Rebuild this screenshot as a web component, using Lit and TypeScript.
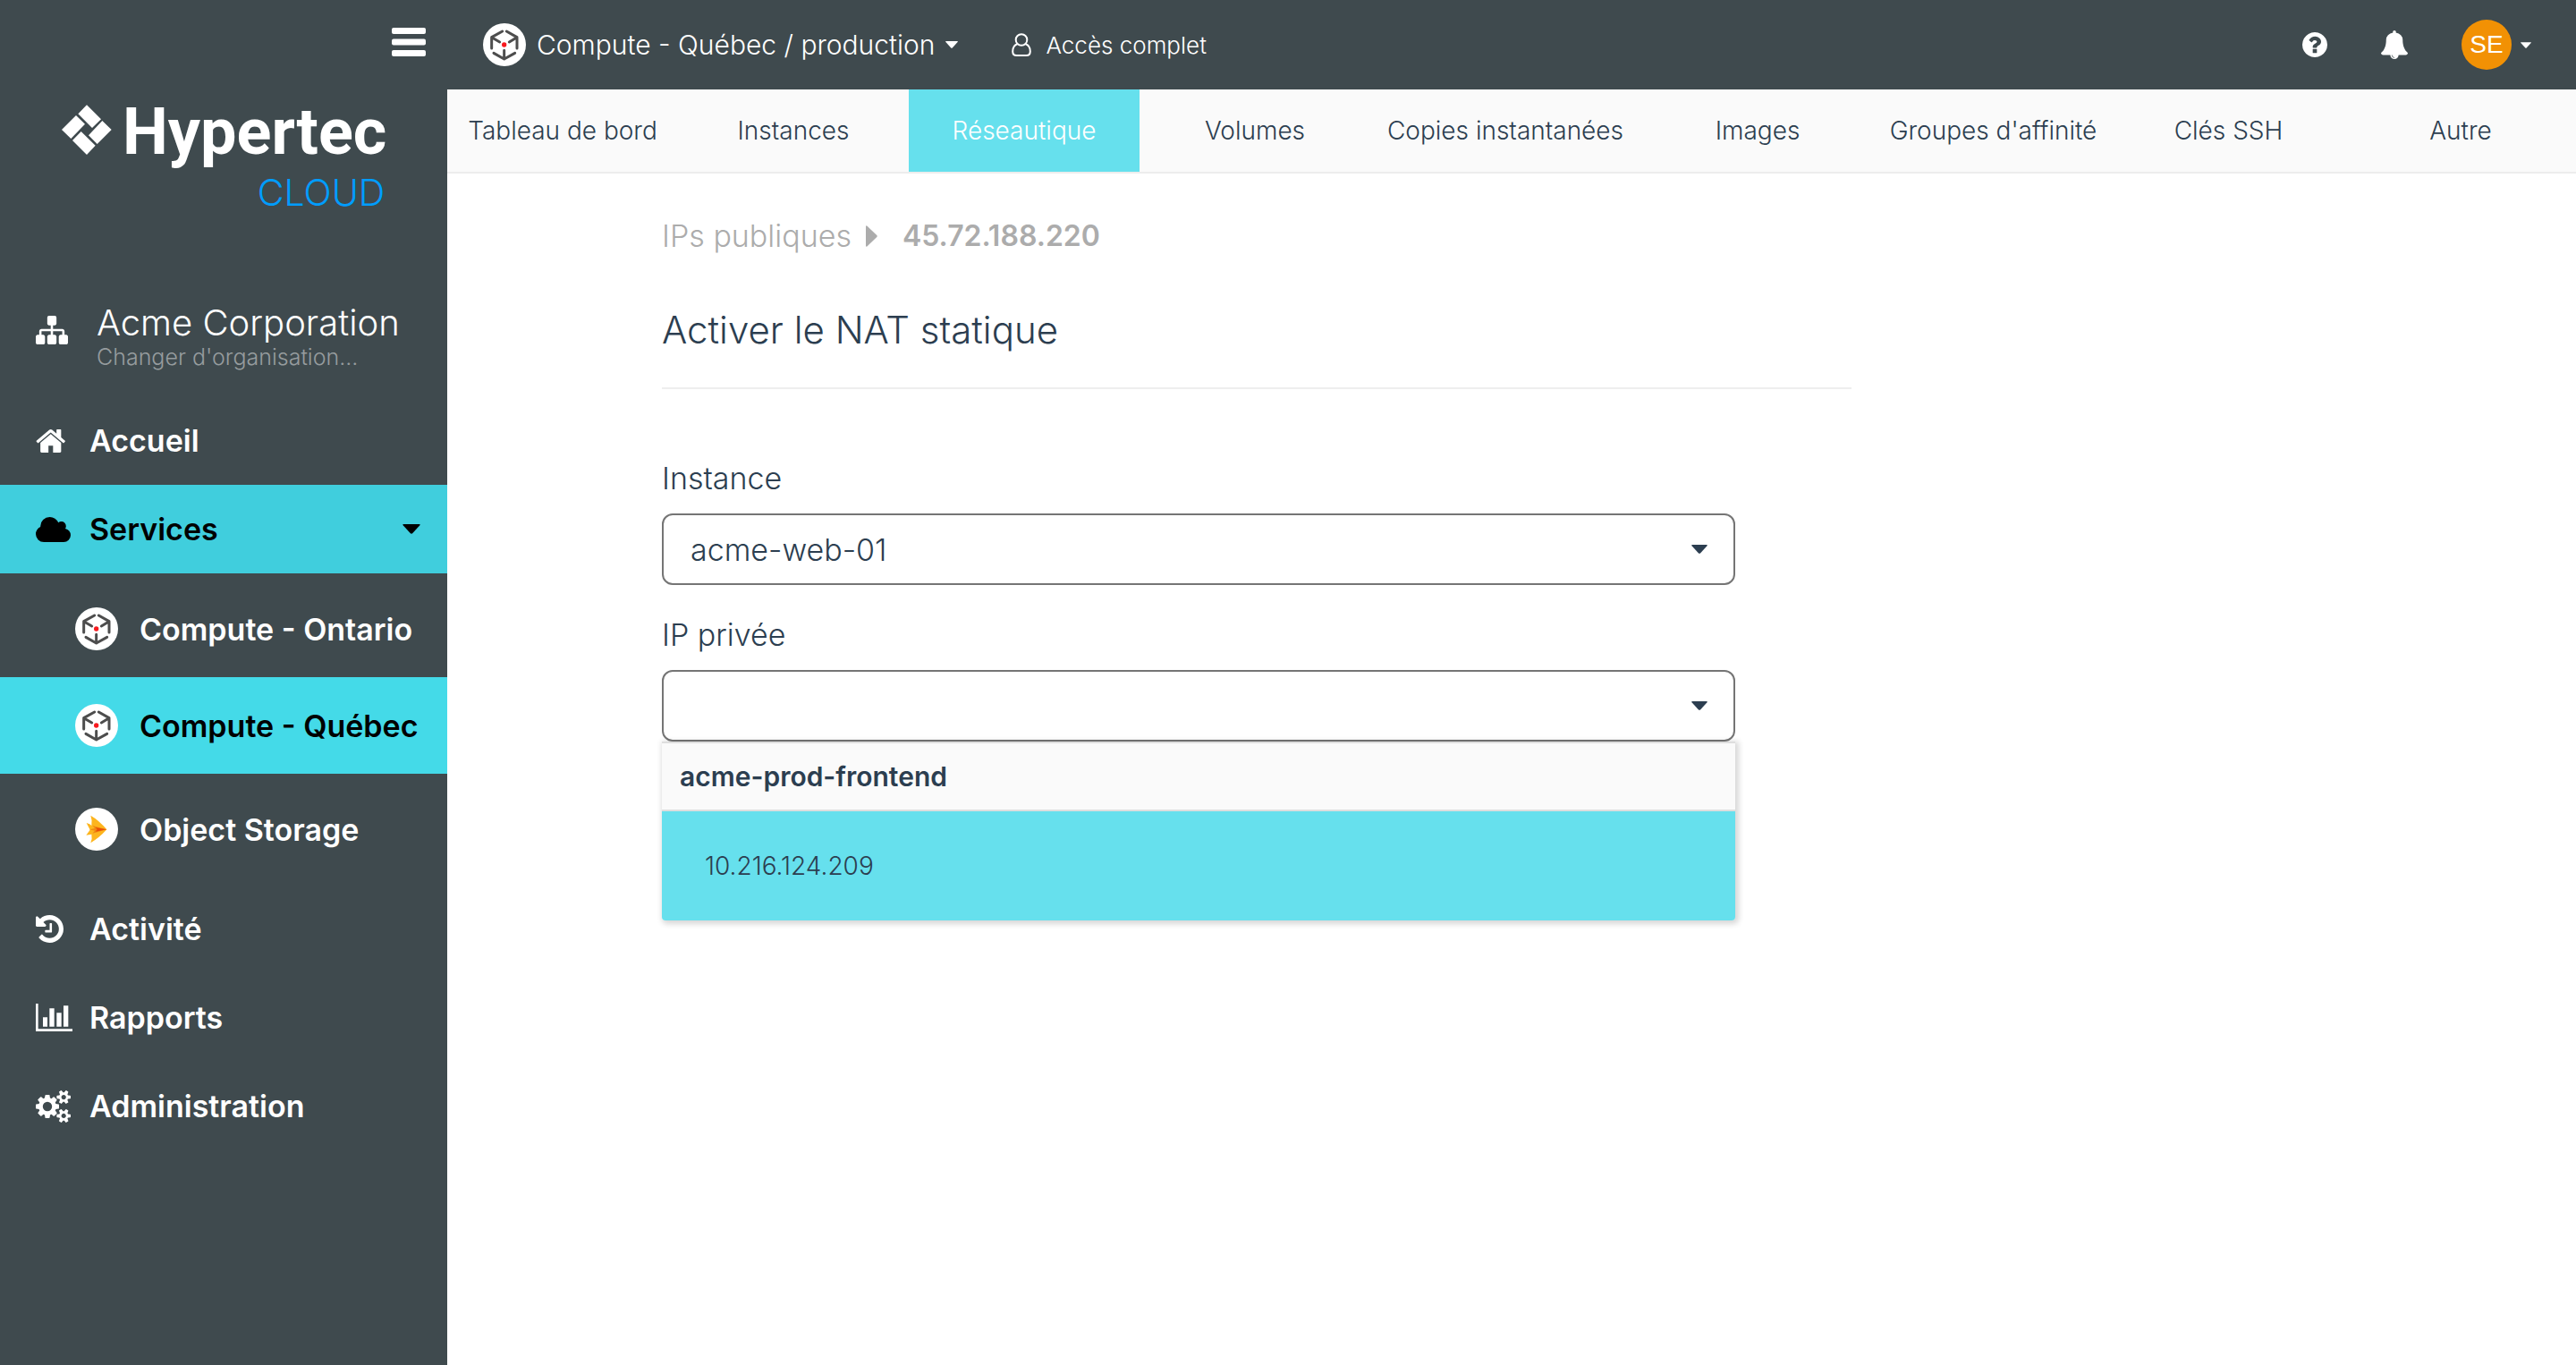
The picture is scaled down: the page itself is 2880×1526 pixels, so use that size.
import { LitElement, html, css, svg } from "lit";
import { customElement } from "lit/decorators.js";
import { classMap } from "lit/directives/class-map.js";

const caret = (cls: string) =>
  html`<svg class=${cls} viewBox="0 0 18 10" aria-hidden="true"><path d="M1 0h16q1.500 0 .5 1.200L10 9.400q-1 .9-2 0L.5 1.200Q-.5 0 1 0z" fill="currentColor" /></svg>`;

const glyph = (viewBox: string, width: number, height: number, d: string) =>
  html`<svg viewBox=${viewBox} width=${width} height=${height} preserveAspectRatio="none" fill="currentColor" aria-hidden="true"><path d=${d} /></svg>`;

const COGS =
  "M896 896q0-106-75-181t-181-75-181 75-75 181 75 181 181 75 181-75 75-181zm768 512q0-52-38-90t-90-38-90 38-38 90q0 53 37.5 90.5t90.5 37.5 90.5-37.5 37.5-90.5zm0-1024q0-52-38-90t-90-38-90 38-38 90q0 53 37.5 90.5t90.5 37.5 90.5-37.5 37.5-90.5zm-384 421v185q0 10-7 19.5t-16 10.5l-155 24q-11 35-32 76 34 48 90 115 7 11 7 20 0 12-7 19-23 30-82.5 89.5t-78.5 59.5q-11 0-21-7l-115-90q-37 19-77 31-11 108-23 155-7 24-30 24h-186q-11 0-20-7.5t-10-17.5l-23-153q-34-10-75-31l-118 89q-7 7-20 7-11 0-21-8-144-133-144-160 0-9 7-19 10-14 41-53t47-61q-23-44-35-82l-152-24q-10-1-17-9.5t-7-19.500v-185q0-10 7-19.500t16-10.500l155-24q11-35 32-76-34-48-90-115-7-11-7-20 0-12 7-20 22-30 82-89t79-59q11 0 21 7l115 90q34-18 77-32 11-108 23-154 7-24 30-24h186q11 0 20 7.500t10 17.500l23 153q34 10 75 31l118-89q8-7 20-7 11 0 21 8 144 133 144 160 0 8-7 19-12 16-42 54t-45 60q23 48 34 82l152 23q10 2 17 10.500t7 19.500zm640 533v140q0 16-149 31-12 27-30 52 51 113 51 138 0 4-4 7-122 71-124 71-8 0-46-47t-52-68q-20 2-30 2t-30-2q-14 21-52 68t-46 47q-2 0-124-71-4-3-4-7 0-25 51-138-18-25-30-52-149-15-149-31v-140q0-16 149-31 13-29 30-52-51-113-51-138 0-4 4-7 4-2 35-20t59-34 30-16q8 0 46 46.500t52 67.500q20-2 30-2t30 2q51-71 92-112l6-2q4 0 124 70 4 3 4 7 0 25-51 138 17 23 30 52 149 15 149 31zm0-1024v140q0 16-149 31-12 27-30 52 51 113 51 138 0 4-4 7-122 71-124 71-8 0-46-47t-52-68q-20 2-30 2t-30-2q-14 21-52 68t-46 47q-2 0-124-71-4-3-4-7 0-25 51-138-18-25-30-52-149-15-149-31v-140q0-16 149-31 13-29 30-52-51-113-51-138 0-4 4-7 4-2 35-20t59-34 30-16q8 0 46 46.500t52 67.500q20-2 30-2t30 2q51-71 92-112l6-2q4 0 124 70 4 3 4 7 0 25-51 138 17 23 30 52 149 15 149 31z";

const icons = {
  sitemap: glyph("0 128 1792 1536", 36, 32, "M1792 1248v320q0 40-28 68t-68 28h-320q-40 0-68-28t-28-68v-320q0-40 28-68t68-28h96v-192h-512v192h96q40 0 68 28t28 68v320q0 40-28 68t-68 28h-320q-40 0-68-28t-28-68v-320q0-40 28-68t68-28h96v-192h-512v192h96q40 0 68 28t28 68v320q0 40-28 68t-68 28h-320q-40 0-68-28t-28-68v-320q0-40 28-68t68-28h96v-192q0-52 38-90t90-38h512v-192h-96q-40 0-68-28t-28-68v-320q0-40 28-68t68-28h320q40 0 68 28t28 68v320q0 40-28 68t-68 28h-96v192h512q52 0 90 38t38 90v192h96q40 0 68 28t28 68z"),
  home: glyph("64 250 1640 1286", 33, 26, "M1472 992v480q0 26-19 45t-45 19h-384v-384h-256v384h-384q-26 0-45-19t-19-45v-480q0-1 .5-3t.5-3l575-474 575 474q1 2 1 6zm223-69l-62 74q-8 9-21 11h-3q-13 0-21-7l-692-577-692 577q-12 8-24 7-13-2-21-11l-62-74q-8-10-7-23.500t11-21.500l719-599q32-26 76-26t76 26l244 204v-195q0-14 9-23t23-9h192q14 0 23 9t9 23v408l219 182q10 8 11 21.500t-7 23.500z"),
  cloud: glyph("-64 128 1920 1408", 39, 28, "M1856 1152q0 159-112.500 271.500t-271.500 112.500h-1088q-185 0-316.500-131.500t-131.500-316.500q0-132 71-241.500t187-163.500q-2-28-2-43 0-212 150-362t362-150q158 0 286.500 88t187.500 230q70-62 166-62 106 0 181 75t75 181q0 75-41 138 129 30 213 134.500t84 239.500z"),
  history: glyph("128 128 1536 1536", 31, 31, "M1664 896q0 156-61 298t-164 245-245 164-298 61q-172 0-327-72.500t-264-204.500q-7-10-6.500-22.500t8.500-20.500l137-138q10-9 25-9 16 2 23 12 73 95 179 147t225 52q104 0 198.500-40.500t163.500-109.500 109.500-163.500 40.500-198.500-40.500-198.500-109.500-163.500-163.500-109.500-198.500-40.500q-98 0-188 35.500t-160 101.500l137 138q31 30 14 69-17 40-59 40h-448q-26 0-45-19t-19-45v-448q0-42 40-59 39-17 69 14l130 129q107-101 244.500-156.500t284.500-55.500q156 0 298 61t245 164 164 245 61 298zm-640-288v448q0 14-9 23t-23 9h-320q-14 0-23-9t-9-23v-64q0-14 9-23t23-9h224v-352q0-14 9-23t23-9h64q14 0 23 9t9 23z"),
  chart: glyph("0 0 123 94", 41, 31, "M0 0h8v86h115v8H0zM24 46h15v32h-15zM46 16h16v62h-16zM70 31h16v47h-16zM93 7h16v71h-16z"),
  cogs: glyph("0 16 1920 1760", 39, 36, COGS),
  help: glyph("128 128 1536 1536", 28, 28, "M1024 1376v-192q0-14-9-23t-23-9h-192q-14 0-23 9t-9 23v192q0 14 9 23t23 9h192q14 0 23-9t9-23zm256-672q0-88-55.500-163t-138.500-116-170-41q-243 0-371 213-15 24 8 42l132 100q7 6 19 6 16 0 25-12 53-68 86-92 34-24 86-24 48 0 85.500 26t37.500 59q0 38-20 61t-68 45q-63 28-115.500 86.500t-52.500 125.500v36q0 14 9 23t23 9h192q14 0 23-9t9-23q0-19 21.500-49.500t54.500-49.500q32-18 49-28.500t46-35 44.500-48 28-60.500 12.500-81zm384 192q0 209-103 385.500t-279.500 279.500-385.500 103-385.500-103-279.500-279.500-103-385.500 103-385.500 279.500-279.500 385.500-103 385.500 103 279.500 279.500 103 385.500z"),
  bell: glyph("64 0 1664 1792", 30, 32, "M912 1696q0-16-16-16-59 0-101.500-42.500t-42.500-101.500q0-16-16-16t-16 16q0 73 51.500 124.500t124.500 51.500q16 0 16-16zm816-288q0 52-38 90t-90 38h-448q0 106-75 181t-181 75-181-75-75-181h-448q-52 0-90-38t-38-90q50-42 91-88t85-119.500 74.500-158.500 50-206 19.500-260q0-152 117-282.500t307-158.500q-8-19-8-39 0-40 28-68t68-28 68 28 28 68q0 20-8 39 190 28 307 158.500t117 282.500q0 139 19.500 260t50 206 74.500 158.500 85 119.500 91 88z"),
};

const cubeMark = svg`
  <g fill="none" stroke="#4d4d4d" stroke-width="9" stroke-linecap="round" stroke-linejoin="round">
    <path d="M29 84V47L65 27M29 47L56 63" />
    <path d="M79 27L114 47V84M114 47L88 63" />
    <path d="M36 100L71 120L107 100M71 120V91" />
  </g>
  <circle cx="71" cy="72" r="8" fill="#f8191e" />`;

const storageMark = svg`
  <path d="M52 26Q80 42 106 73Q82 100 52 118Q58 104 55 89L37 92L50 74L38 51Q50 54 55 60Q58 42 52 26z" fill="#fdb51e" />
  <path d="M58 60L106 73L58 86L66 77L48 73L66 69z" fill="#f08a12" />
  <path d="M68 66L106 73L68 80L74 73z" fill="#ea4e06" />`;

const badge = (mark: unknown) =>
  html`<svg class="badge" viewBox="0 0 144 144" aria-hidden="true"><circle cx="72" cy="72" r="72" fill="#fff" />${mark}</svg>`;

@customElement("app-sidebar")
class AppSidebar extends LitElement {
  static styles = css`
    :host {
      display: block;
      background: #3f4a4e;
      color: #fff;
    }
    a {
      color: inherit;
      text-decoration: none;
    }
    .top {
      display: flex;
      justify-content: flex-end;
      padding: 31px 24px 0 0;
    }
    .menu {
      display: flex;
      padding: 0;
      border: 0;
      background: none;
      color: inherit;
    }
    .brand {
      display: grid;
      grid-template-columns: 56px auto;
      column-gap: 12px;
      justify-content: start;
      padding: 37px 0 0 69px;
    }
    .mark {
      margin-top: 17px;
    }
    .name {
      font: 700 72px/96px Roboto, sans-serif;
    }
    .cloud {
      grid-column: 1 / -1;
      justify-self: end;
      font-size: 41px;
      line-height: 38px;
      padding: 0 2px 2px 0;
      color: #009dff;
    }
    .org {
      display: flex;
      align-items: center;
      padding: 103px 0 28px 40px;
    }
    .icon {
      display: flex;
      flex: none;
      width: 60px;
    }
    .org .icon {
      width: 68px;
      padding-bottom: 16px;
    }
    .org-name {
      display: block;
      font-size: 40px;
      font-weight: 300;
      line-height: 44px;
      white-space: nowrap;
    }
    .org-sub {
      display: block;
      font-size: 25px;
      line-height: 32px;
      color: #969c9e;
    }
    ul {
      list-style: none;
      margin: 0;
      padding: 0;
      font-size: 34px;
      font-weight: 600;
    }
    .row {
      display: flex;
      align-items: center;
      height: 99px;
      padding: 0 30px 0 40px;
    }
    .open {
      background: #40cedd;
      color: #000;
    }
    .caret {
      width: 20px;
      height: 11px;
      margin-left: auto;
    }
    .sub {
      padding: 8px 0;
    }
    .sub .row {
      height: 108px;
      padding: 0 0 0 84px;
      gap: 24px;
      white-space: nowrap;
    }
    .current {
      background: #44dae8;
      color: #000;
    }
    .spaced {
      margin-top: 8px;
    }
    .badge {
      flex: none;
      width: 48px;
      height: 48px;
    }
  `;

  private row(label: string, icon: unknown) {
    return html`<li><a class="row" href="#"><span class="icon">${icon}</span>${label}</a></li>`;
  }

  private service(label: string, mark: unknown, current = false, spaced = false) {
    return html`<li class=${classMap({ spaced })}>
      <a class=${classMap({ row: true, current })} href="#">${badge(mark)}${label}</a>
    </li>`;
  }

  render() {
    return html`
      <div class="top">
        <button class="menu" aria-label="Menu">
          <svg width="38" height="32" viewBox="0 0 38 32" fill="currentColor" aria-hidden="true">
            <rect width="38" height="7" rx="2" /><rect y="12.500" width="38" height="7" rx="2" /><rect y="25" width="38" height="7" rx="2" />
          </svg>
        </button>
      </div>
      <a class="brand" href="#">
        <svg class="mark" width="56" height="56" viewBox="0 0 168 168" fill="#fff" aria-hidden="true">
          <path d="M84 1L132 49L102 78L55 31zM136 54L167 84L119 132L90 103zM65 90L113 137L84 168L36 120zM48 36L78 65L31 114L0 84z" />
        </svg>
        <span class="name">Hypertec</span>
        <span class="cloud">CLOUD</span>
      </a>
      <a class="org" href="#">
        <span class="icon">${icons.sitemap}</span>
        <span><span class="org-name">Acme Corporation</span><span class="org-sub">Changer d'organisation...</span></span>
      </a>
      <nav>
        <ul>
          ${this.row("Accueil", icons.home)}
          <li>
            <a class="row open" href="#"><span class="icon">${icons.cloud}</span>Services${caret("caret")}</a>
            <ul class="sub">
              ${this.service("Compute - Ontario", cubeMark)}
              ${this.service("Compute - Québec", cubeMark, true)}
              ${this.service("Object Storage", storageMark, false, true)}
            </ul>
          </li>
          ${this.row("Activité", icons.history)}
          ${this.row("Rapports", icons.chart)}
          ${this.row("Administration", icons.cogs)}
        </ul>
      </nav>
    `;
  }
}

@customElement("app-header")
class AppHeader extends LitElement {
  static styles = css`
    :host {
      display: block;
    }
    a,
    button {
      color: inherit;
      text-decoration: none;
    }
    button {
      display: flex;
      align-items: center;
      padding: 0;
      border: 0;
      background: none;
      font: inherit;
    }
    .bar {
      display: flex;
      align-items: center;
      height: 100px;
      padding: 0 50px 0 40px;
      background: #3f4a4e;
      color: #fff;
    }
    .context {
      gap: 12px;
      font-size: 30px;
    }
    .badge {
      width: 48px;
      height: 48px;
    }
    .caret {
      width: 14px;
      height: 8px;
    }
    .access {
      display: flex;
      align-items: center;
      gap: 16px;
      margin-left: 60px;
      font-size: 26px;
    }
    .tools {
      display: flex;
      align-items: center;
      margin-left: auto;
      gap: 60px;
    }
    .user {
      gap: 10px;
    }
    .user .caret {
      width: 12px;
      height: 7px;
    }
    .avatar {
      display: grid;
      place-items: center;
      width: 56px;
      height: 56px;
      border-radius: 50%;
      background: #f29104;
      font: 28px/32px "Liberation Sans", sans-serif;
    }
    .tabs {
      display: grid;
      grid-template-columns: repeat(4, 258fr) 302fr 262fr 265fr 261fr 258fr;
      height: 92px;
      border-bottom: 2px solid #ededed;
      background: #fafafa;
      font-size: 28px;
      color: #2c3e50;
    }
    .tab {
      display: grid;
      place-items: center;
      white-space: nowrap;
    }
    .active {
      background: #66e0ed;
      color: #fff;
    }
  `;

  private tabs = ["Tableau de bord", "Instances", "Réseautique", "Volumes", "Copies instantanées", "Images", "Groupes d'affinité", "Clés SSH", "Autre"];

  render() {
    return html`
      <header class="bar">
        <button class="context">${badge(cubeMark)}<span>Compute - Québec / production</span>${caret("caret")}</button>
        <span class="access">
          <svg width="22" height="26" viewBox="0 0 22 26" fill="none" stroke="currentColor" stroke-width="2" aria-hidden="true">
            <circle cx="11" cy="7.500" r="6.300" /><path d="M6.500 12Q1.200 14 1.200 20.500Q1.200 25 5.500 25H16.500Q20.800 25 20.800 20.500Q20.800 14 15.500 12" />
          </svg>
          Accès complet
        </span>
        <div class="tools">
          <button aria-label="Aide">${icons.help}</button>
          <button aria-label="Notifications">${icons.bell}</button>
          <button class="user"><span class="avatar">SE</span>${caret("caret")}</button>
        </div>
      </header>
      <nav class="tabs">
        ${this.tabs.map((t) => html`<a class=${classMap({ tab: true, active: t === "Réseautique" })} href="#">${t}</a>`)}
      </nav>
    `;
  }
}

@customElement("nat-form")
class NatForm extends LitElement {
  static styles = css`
    :host {
      display: block;
      max-width: 1330px;
      padding: 46px 40px 0 240px;
      font-size: 34px;
      color: #2c3e50;
    }
    .crumbs {
      display: flex;
      align-items: center;
      gap: 16px;
      line-height: 48px;
      color: #acacac;
    }
    .crumbs a {
      color: inherit;
      text-decoration: none;
    }
    .crumbs strong {
      margin-left: 12px;
      font-size: 32px;
      font-weight: 600;
    }
    h1 {
      margin: 0;
      padding: 55px 0 38px;
      border-bottom: 2px solid #eee;
      font-size: 42px;
      font-weight: inherit;
      line-height: 52px;
    }
    .fields {
      max-width: 1200px;
      padding-top: 78px;
    }
    label {
      display: block;
      padding-bottom: 17px;
      line-height: 44px;
    }
    .box {
      display: grid;
      align-items: center;
      margin-bottom: 34px;
    }
    .box > * {
      grid-area: 1 / 1;
    }
    select {
      appearance: none;
      width: 100%;
      height: 80px;
      padding: 0 30px;
      border: 2px solid #757575;
      border-radius: 12px;
      background: #fff;
      color: inherit;
      font: inherit;
    }
    .caret {
      justify-self: end;
      width: 18px;
      height: 10px;
      margin-right: 31px;
      pointer-events: none;
    }
    .anchor {
      position: relative;
    }
    .list {
      position: absolute;
      top: 100%;
      left: 0;
      right: 0;
      border-radius: 0 0 4px 4px;
      box-shadow: 2px 2px 6px 2px rgba(0, 0, 0, 0.16);
      font-size: 28px;
    }
    .group {
      padding: 0 20px;
      border: solid #dedede;
      border-width: 2px 0;
      background: #fafafa;
      font-size: 30px;
      font-weight: 600;
      line-height: 74px;
    }
    .option {
      padding: 0 48px;
      border-radius: 0 0 4px 4px;
      background: #66e0ed;
      line-height: 122px;
    }
  `;

  render() {
    return html`
      <nav class="crumbs">
        <a href="#">IPs publiques</a>
        <svg width="13" height="24" viewBox="0 0 13 22" preserveAspectRatio="none" fill="currentColor" aria-hidden="true"><path d="M0 1.500Q0-.8 1.600.8L12.300 10q.9 1 0 2L1.600 21.200Q0 22.800 0 20.500z" /></svg>
        <strong>45.72.188.220</strong>
      </nav>
      <h1>Activer le NAT statique</h1>
      <form class="fields">
        <label for="instance">Instance</label>
        <div class="box">
          <select id="instance">
            <option>acme-web-01</option>
          </select>
          ${caret("caret")}
        </div>
        <label for="ip">IP privée</label>
        <div class="anchor">
          <div class="box">
            <select id="ip" aria-controls="ip-list">
              <option></option>
            </select>
            ${caret("caret")}
          </div>
          <div class="list" id="ip-list" role="listbox" aria-label="IP privée">
            <div class="group">acme-prod-frontend</div>
            <div class="option" role="option" aria-selected="true">10.216.124.209</div>
          </div>
        </div>
      </form>
    `;
  }
}

@customElement("app-root")
class AppRoot extends LitElement {
  static styles = css`
    :host {
      display: grid;
      grid-template-columns: 500px 1fr;
      min-height: 100vh;
      background: #fff;
      font-family: Inter, "Open Sans", sans-serif;
      font-weight: 350;
    }
  `;

  render() {
    return html`
      <app-sidebar></app-sidebar>
      <div>
        <app-header></app-header>
        <main><nat-form></nat-form></main>
      </div>
    `;
  }
}
